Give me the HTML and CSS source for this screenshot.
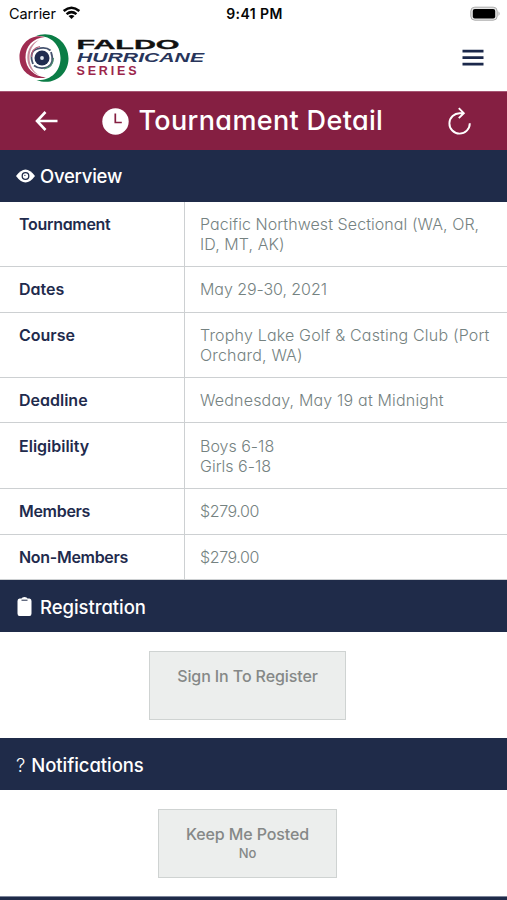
FILE: index.html
```html
<!DOCTYPE html>
<html lang="en">
<head>
<meta charset="utf-8">
<title>Tournament Detail</title>
<link rel="stylesheet" href="styles.css">
</head>
<body>
<div class="status">
  <div class="carrier"><span>Carrier</span>
    <svg width="19" height="14" viewBox="0 0 20 15" fill="none" stroke="#050505" stroke-width="2.7"><path d="M1.6 5.4Q10-1.7 18.4 5.4M4.7 8.7Q10 4.4 15.3 8.7"/><path d="M6.8 10.8Q10 8.5 13.2 10.8L10 14Z" fill="#050505" stroke="none"/></svg>
  </div>
  <div class="time">9:41 PM</div>
  <svg class="battery" width="31" height="16" viewBox="0 0 31 16"><rect x=".8" y="1.2" width="26.4" height="13" rx="4" fill="#e6e6e6" stroke="#aaa"/><rect x="2.8" y="3" width="22.4" height="9.4" rx="2" fill="#000"/><path d="M28.5 5.3Q30.8 7.7 28.5 10Z" fill="#aaa"/></svg>
</div>
<header class="brand">
  <svg class="logo" width="190" height="54" viewBox="0 0 190 54">
    <path d="M16 4.500C33-3 49.500 10 49.500 26.500C49.500 43 34 54.500 17.500 48C31 49 41.500 40 41.500 26C41.500 11 29 2 16 4.500Z" fill="#0b7d46"/>
    <path d="M26 5C12 1 .5 12 .5 25C.5 39 12 48.500 27 45.500C15 44.500 6.500 36 6.500 25.500C6.500 14 14 6 26 5Z" fill="#a02c51"/>
    <path d="M20 8C12 11 8.300 18 8.300 25.500C8.300 34 13 40.500 20 43C13.500 39 10.500 33 10.500 25.500C10.500 18 14 12 20 8Z" fill="#c88a9c"/>
    <circle cx="23" cy="26" r="7.500" fill="#202c50"/>
    <path d="M14 32Q9.500 20 18 17T31.500 18.500" fill="none" stroke="#46536f" stroke-width="1.800"/>
    <path d="M32 20Q36 32 28.500 35T15 33.500" fill="none" stroke="#46536f" stroke-width="1.800"/>
    <path d="M12.500 25Q12.500 16 21 14.500" fill="none" stroke="#b4607a" stroke-width="1.200"/>
    <path d="M34.500 26Q34 35.500 25 37" fill="none" stroke="#4c9070" stroke-width="1.200"/>
    <circle cx="23" cy="26" r="1.900" fill="#dfe5ee"/>
    <text class="faldo" x="57.500" y="16.600" textLength="103" lengthAdjust="spacingAndGlyphs">FALDO</text>
    <text class="hurricane" x="58" y="30.300" textLength="127" lengthAdjust="spacingAndGlyphs">HURRICANE</text>
    <text class="series" x="57.500" y="43.300" textLength="60" lengthAdjust="spacing">SERIES</text>
  </svg>
  <svg class="menu" width="22" height="18" viewBox="0 0 22 18" stroke="#1b284b" stroke-width="2.700"><path d="M.5 2.200h21M.5 8.700h21M.5 15.200h21"/></svg>
</header>
<nav class="titlebar">
  <svg class="back" width="24" height="22" viewBox="0 0 24 22" fill="none" stroke="#fff" stroke-width="2.600"><path d="M10.500 2L2 11l8.500 9M2.500 11H22.500"/></svg>
  <h1><svg width="27" height="27" viewBox="0 0 27 27"><circle cx="13.500" cy="13.500" r="13.200" fill="#fff"/><path d="M13.300 5.500v9h6.500" fill="none" stroke="#851f42" stroke-width="1.700"/></svg><span>Tournament Detail</span></h1>
  <svg class="refresh" width="26" height="28" viewBox="0 0 26 28" fill="none" stroke="#fff" stroke-width="1.900"><path d="M17 6.200H13A10.200 10.200 0 1 0 22.800 16.300M11.800 1.200l5 5-5 5"/></svg>
</nav>
<section>
  <h2 class="overview"><svg width="19" height="14" viewBox="0 0 19 14"><path d="M0 7Q9.500-6 19 7Q9.500 20 0 7Z" fill="#fff"/><circle cx="9.500" cy="7" r="3.300" fill="none" stroke="#1f2b49" stroke-width="1.300"/><circle cx="8.900" cy="6.400" r=".6" fill="#1f2b49"/></svg><span>Overview</span></h2>
  <dl>
    <div class="row"><dt>Tournament</dt><dd><span class="v1">Pacific Northwest Sectional (WA, OR,<br>ID, MT, AK)</span></dd></div>
    <div class="row"><dt class="short">Dates</dt><dd><span class="v2">May 29-30, 2021</span></dd></div>
    <div class="row"><dt class="short">Course</dt><dd><span class="v3">Trophy Lake Golf &amp; Casting Club (Port<br>Orchard, WA)</span></dd></div>
    <div class="row tight"><dt class="short">Deadline</dt><dd><span class="v3">Wednesday, May 19 at Midnight</span></dd></div>
    <div class="row tall"><dt class="short">Eligibility</dt><dd>Boys 6-18<br>Girls 6-18</dd></div>
    <div class="row"><dt>Members</dt><dd><span class="price">$279.00</span></dd></div>
    <div class="row tight"><dt>Non-Members</dt><dd><span class="price">$279.00</span></dd></div>
  </dl>
</section>
<section>
  <h2 class="registration"><svg width="15" height="19" viewBox="0 0 15 19"><path d="M2.500 1.500h2Q5 0 7.500 0T10.500 1.500h2Q14.500 1.500 14.500 4v12.500Q14.500 19 12.500 19h-10Q.5 19 .5 16.500V4Q.5 1.500 2.500 1.500Z" fill="#fff"/><path d="M4.500 3.200h6" stroke="#1f2b49" stroke-width="1"/></svg><span>Registration</span></h2>
  <div class="panel"><button class="register">Sign In To Register</button></div>
</section>
<section>
  <h2 class="notifications"><i>?</i><span>Notifications</span></h2>
  <div class="panel"><button class="posted">Keep Me Posted<small>No</small></button></div>
</section>
<div class="next"></div>
</body>
</html>
```
FILE: styles.css
```css
* { box-sizing: border-box; }
body { margin: 0; height: 900px; overflow: hidden; background: #fff; color: #1f2b4d; font-family: Inter, "Open Sans", sans-serif; font-feature-settings: "cv11" 1, "calt" 0; }
svg { display: block; flex: none; }
.status { height: 28px; display: grid; grid-template-columns: 1fr auto 1fr; align-items: center; padding: 0 8px 0 9px; color: #050505; font-size: 14.5px; font-feature-settings: normal; }
.carrier { display: flex; gap: 6px; align-items: center; }
.carrier span { letter-spacing: -.1px; margin-top: -2px; }
.carrier svg { margin-top: -2px; }
.time { font-weight: 600; font-size: 14px; letter-spacing: .4px; margin: -2px 0 0 1px; }
.battery { justify-self: end; margin: -1px -2px 0 0; }
.brand { height: 63px; display: flex; justify-content: space-between; align-items: flex-start; padding: 4px 23.5px 0 19px; }
.menu { margin-top: 17px; }
.faldo { font: 700 12.5px "Liberation Sans", sans-serif; fill: #111; stroke: #111; stroke-width: .3; }
.hurricane { font: italic 700 12.5px "Liberation Sans", sans-serif; fill: #28355b; }
.series { font: 700 12.5px "Liberation Sans", sans-serif; fill: #9c264b; }
.titlebar { height: 59px; background: #851f42; border-top: 1px solid #a65673; color: #fff; display: grid; grid-template-columns: 24px 1fr 26px; align-items: center; padding: 0 34px 0 35px; }
h1 { margin: 0 0 0 42.5px; display: flex; align-items: center; gap: 10px; font-size: 27px; line-height: 36px; font-weight: 500; white-space: nowrap; }
h1 span { letter-spacing: .35px; }
h2 { margin: 0; height: 52px; background: #1f2b49; color: #fff; display: flex; align-items: center; padding-left: 16px; font-size: 18.5px; font-weight: 500; letter-spacing: -.05px; }
h2.overview { letter-spacing: -.25px; }
h2 svg { margin-right: 5px; }
h2.registration svg { margin: -1px 8px 0 1px; }
h2.registration, h2.notifications { padding-top: 1px; }
h2 i { font-style: normal; font-weight: 300; margin-right: 6px; }
dl { margin: 0; }
.row { display: grid; grid-template-columns: 185px 1fr; border-bottom: 1px solid #cdd0d2; font-size: 16px; line-height: 20px; }
dt { padding: 12px 0 13px 19px; border-right: 1px solid #cdd0d2; font-weight: 600; letter-spacing: -.3px; }
dt.short { letter-spacing: 0; }
dd { margin: 0; padding: 12px 0 12px 15px; color: #758281; font-weight: 300; white-space: nowrap; }
.v1 { letter-spacing: .07px; }
.v2 { letter-spacing: -.07px; }
.v3 { letter-spacing: .18px; }
.price { letter-spacing: -.4px; }
.row.tight dt { padding-bottom: 12px; }
.row.tall dt, .row.tall dd { padding-top: 13px; }
.panel { height: 106px; display: flex; justify-content: center; align-items: flex-start; padding-top: 19px; padding-right: 12px; }
button { height: 69px; background: #eceeed; border: 1px solid #cfd3d2; border-radius: 0; color: #858887; font: 500 16px/20px Inter, sans-serif; font-feature-settings: "cv11" 1; letter-spacing: -.1px; padding: 14px 0 0; display: flex; flex-direction: column; align-items: center; }
.register { width: 197px; }
.posted { width: 179px; }
small { font-size: 13px; line-height: 18px; }
.next { height: 5px; background: #1f2b49; border-top: 1px solid #7d859a; }
```
